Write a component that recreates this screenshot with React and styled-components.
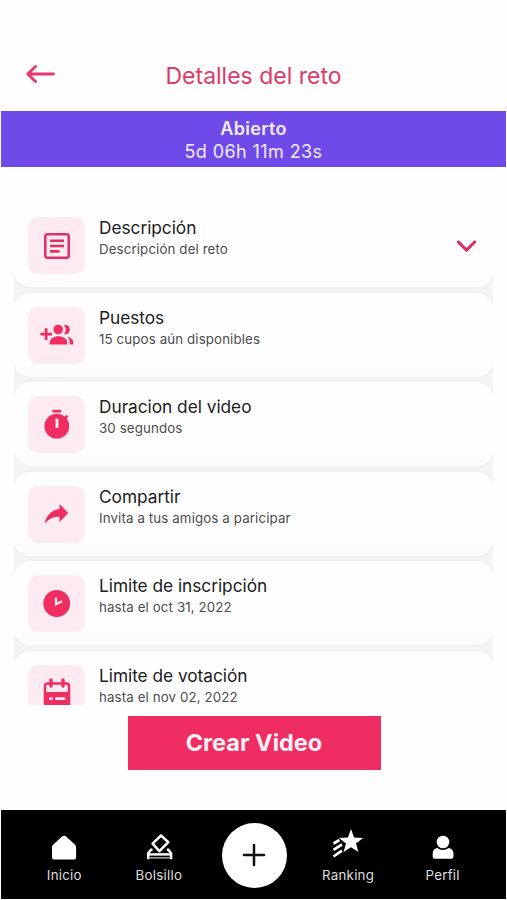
import React from 'react';
import styled, { createGlobalStyle } from 'styled-components';

const pink = '#f02d63';

const GlobalStyle = createGlobalStyle`
  * {
    box-sizing: border-box;
  }
  body {
    margin: 0;
    background: #fff;
    font-family: Inter, 'Liberation Sans', sans-serif;
  }
`;

const Screen = styled.div`
  width: 507px;
  height: 900px;
  display: flex;
  flex-direction: column;
  overflow: hidden;
  background: #fefefe;
`;

const Header = styled.header`
  height: 111px;
  flex: none;
  padding: 40px 26px 0;
  display: grid;
  grid-template-columns: 30px 1fr 30px;
  align-items: center;
`;

const BackButton = styled.button`
  border: 0;
  padding: 0 0 3px;
  height: 30px;
  background: none;
  display: flex;
  align-items: center;
`;

const Title = styled.h1`
  margin: 0;
  text-align: center;
  font-size: 23px;
  font-weight: 400;
  line-height: 30px;
  color: #dc3a68;
  white-space: nowrap;
`;

const Banner = styled.div`
  flex: none;
  height: 56px;
  margin: 0 1px;
  padding-top: 6px;
  text-align: center;
  color: #f1edff;
  background: #7049e9;
`;

const Status = styled.div`
  font-size: 18px;
  font-weight: 600;
  line-height: 23px;
  letter-spacing: 0.3px;
`;

const Countdown = styled.div`
  font-size: 18px;
  line-height: 23px;
  letter-spacing: 0.4px;
`;

const List = styled.div`
  flex: none;
  height: 502px;
  margin: 36px 14px 0;
  overflow: hidden;
  display: flex;
  flex-direction: column;
  gap: 5.6px;
  background: #f4f4f4;
`;

const Card = styled.div`
  flex: none;
  height: 84px;
  padding: 14px 16px 0 14px;
  display: flex;
  border-radius: 16px;
  background: linear-gradient(#fefefe 80%, #fbfbfb);
  box-shadow: 0 0 5px rgba(0, 0, 0, 0.03);

  &:first-child {
    border-top-left-radius: 0;
    border-top-right-radius: 0;
  }
`;

const IconBox = styled.div`
  flex: none;
  width: 57px;
  height: 57px;
  border-radius: 10px;
  display: flex;
  align-items: center;
  justify-content: center;
  background: #fdebf1;
`;

const CardText = styled.div`
  flex: 1;
  margin-left: 14px;
`;

const CardTitle = styled.div`
  font-size: 17.3px;
  line-height: 22px;
  letter-spacing: -0.03px;
  color: #202020;
`;

const CardSub = styled.div`
  margin-top: 1px;
  font-size: 13.3px;
  line-height: 19px;
  letter-spacing: 0.12px;
  color: #4c4c4c;
`;

const Chevron = styled.div`
  display: flex;
  align-items: center;
  height: 58px;
`;

const CreateButton = styled.button`
  flex: none;
  align-self: center;
  width: 253px;
  height: 54px;
  margin: 11px 0 0 1px;
  border: 0;
  padding: 0 0 1px;
  font-family: inherit;
  font-size: 23.5px;
  font-weight: 700;
  color: #fff0f5;
  background: ${pink};
`;

const NavBar = styled.nav`
  flex: none;
  height: 89px;
  margin: 40px 1px 0;
  padding: 0 16px;
  display: grid;
  grid-template-columns: repeat(5, 94.6px);
  background: #000;
`;

const NavItem = styled.div`
  display: flex;
  flex-direction: column;
  align-items: center;
  padding-top: 18px;
  font-size: 13.3px;
  line-height: 18px;
  letter-spacing: 0.25px;
  color: #dedede;
`;

const NavIcon = styled.div`
  height: 38px;
  padding-bottom: ${(props) => props.$lift || 0}px;
  display: flex;
  align-items: center;
`;

const AddButton = styled.div`
  justify-self: center;
  width: 65px;
  height: 65px;
  margin: 13px 0 0 2px;
  padding-bottom: 2px;
  border-radius: 50%;
  display: flex;
  align-items: center;
  justify-content: center;
  background: #fff;
`;

const ArrowLeft = () => (
  <svg width="30" height="20" viewBox="0 0 30 20" fill="none" stroke="#e5396b" strokeWidth="2.9" strokeLinecap="round" strokeLinejoin="round">
    <path d="M27.5 10H2.5M9.5 2.5 1.8 10l7.7 7.5" />
  </svg>
);

const ChevronDown = () => (
  <svg width="21" height="14" viewBox="0 0 21 14" fill="none" stroke="#d92f63" strokeWidth="3.1" strokeLinecap="round">
    <path d="M2.3 3 10.5 11 18.7 3" />
  </svg>
);

const ArticleIcon = () => (
  <svg width="30" height="30" viewBox="0 0 30 30" fill="none" stroke="#df2f66" strokeWidth="2.5">
    <rect x="3.3" y="3.3" width="23.4" height="23.4" rx="2" />
    <path d="M8 9.8h14M8 15h14M8 20.4h9.5" strokeWidth="2.6" />
  </svg>
);

const GroupAddIcon = () => (
  <svg width="34" height="24" viewBox="0 0 34 24" fill={pink}>
    <path d="M4.7 5.2h2.8v4.6H12v2.6H7.5v4.6H4.7v-4.6H.5v-2.6h4.2z" />
    <circle cx="18.2" cy="6.5" r="4.8" />
    <path d="M9.7 21.5v-2c0-4 5-6.2 8.800-6.2s8.800 2.200 8.800 6.200v2z" />
    <path d="M24 1.900c3.500-1 5.800 1.500 5.800 4.600s-2.300 5.600-5.800 4.600c2.300-2.500 2.300-6.700 0-9.200z" />
    <path d="M27.200 13.700c3.700.8 6.100 2.800 6.100 5.800v2h-3.600v-2c0-2.400-.7-4.400-2.500-5.800z" />
  </svg>
);

const TimerIcon = () => (
  <svg width="30" height="32" viewBox="0 0 30 32" fill={pink}>
    <path d="M10.500.8h8.700v2.800h-8.700z" />
    <circle cx="14.800" cy="17.200" r="12.400" />
    <path d="m22 8.200 2.500-2.500 1.900 1.800L24 10.500z" />
    <path d="M13.500 9.500h2.900v9.500h-2.900z" fill="#fdebf1" />
  </svg>
);

const ShareIcon = () => (
  <svg width="28" height="24" viewBox="0 0 28 24" fill={pink}>
    <path d="M16.500 2 25.200 11l-8.700 9.200v-5.400C10 14.500 6.200 16.800 1.500 21.700 3.700 13.200 8.500 7.800 16.500 7.100z" />
  </svg>
);

const ClockIcon = () => (
  <svg width="28" height="28" viewBox="0 0 28 28">
    <circle cx="13.700" cy="13.500" r="13.400" fill={pink} />
    <path d="M13 7.800v6.400l6-3" fill="none" stroke="#fdebf1" strokeWidth="2.200" />
  </svg>
);

const CalendarIcon = () => (
  <svg width="28" height="30" viewBox="0 0 28 30">
    <rect x="2" y="5.500" width="24" height="23" rx="2.500" fill="none" stroke={pink} strokeWidth="2.500" />
    <path d="M1 14h26v14H1z" fill={pink} />
    <path d="M8 2v6M20 2v6" stroke={pink} strokeWidth="3.400" strokeLinecap="round" />
    <path d="M7.500 20.700h.8M13.500 20.700H21" stroke="#fdebf1" strokeWidth="2.800" strokeLinecap="round" />
  </svg>
);

const HomeIcon = () => (
  <svg width="26" height="28" viewBox="0 0 26 28" fill="#fff">
    <path d="M1 14.500c0-1.600.5-2.300 1.600-3.300l8.200-7.500c1.400-1.200 3.200-1.200 4.600 0l8.100 7.500c1.100 1 1.600 1.700 1.600 3.300v10c0 1.300-.8 2-2 2H3c-1.200 0-2-.7-2-2z" />
  </svg>
);

const BallotIcon = () => (
  <svg width="28" height="28" viewBox="0 0 28 28" fill="none" stroke="#fff">
    <path d="m16 2.500 7.300 6.700-8.900 9-6.800-7.500z" strokeWidth="2.500" strokeLinejoin="round" />
    <path d="M7.500 16.800H6l-2.800 3.500v6M21.800 16.800h1.500l2.800 3.500v6" strokeWidth="2.500" />
    <path d="M3.500 21.400h22" strokeWidth="2.400" />
    <path d="M3.500 24h22v1.600h-22z" fill="#999" stroke="none" />
  </svg>
);

const StarIcon = () => (
  <svg width="32" height="30" viewBox="0 0 32 30" fill="#fff">
    <path d="m19 0 3.100 8.500 8.900.4-7 5.600 2.400 8.600-7.400-4.900-7.400 4.900L14 14.500 7 8.900l8.900-.4z" />
    <path d="M1.500 14.500 7.500 11M1.500 20.800l8.500-5.300M1.500 27.500l8.500-5.800" fill="none" stroke="#fff" strokeWidth="2.700" />
  </svg>
);

const UserIcon = () => (
  <svg width="24" height="28" viewBox="0 0 24 28" fill="#fff">
    <circle cx="12" cy="9" r="6.300" />
    <path d="M6.200 15c3.500 2.600 8.100 2.600 11.600 0 3.200.6 4.700 2.800 4.700 6v2.200c0 1.700-1 2.600-2.600 2.600H4.300c-1.700 0-2.600-.9-2.600-2.600V21c0-3.200 1.300-5.400 4.500-6z" />
  </svg>
);

const items = [
  { title: 'Descripción', sub: 'Descripción del reto', Icon: ArticleIcon, expandable: true },
  { title: 'Puestos', sub: '15 cupos aún disponibles', Icon: GroupAddIcon },
  { title: 'Duracion del video', sub: '30 segundos', Icon: TimerIcon },
  { title: 'Compartir', sub: 'Invita a tus amigos a paricipar', Icon: ShareIcon },
  { title: 'Limite de inscripción', sub: 'hasta el oct 31, 2022', Icon: ClockIcon },
  { title: 'Limite de votación', sub: 'hasta el nov 02, 2022', Icon: CalendarIcon },
];

const NavLink = ({ Icon, label, lift }) => (
  <NavItem>
    <NavIcon $lift={lift}>
      <Icon />
    </NavIcon>
    {label}
  </NavItem>
);

const App = () => (
  <Screen>
    <GlobalStyle />
    <Header>
      <BackButton aria-label="Volver">
        <ArrowLeft />
      </BackButton>
      <Title>Detalles del reto</Title>
    </Header>
    <Banner>
      <Status>Abierto</Status>
      <Countdown>5d 06h 11m 23s</Countdown>
    </Banner>
    <List>
      {items.map(({ title, sub, Icon, expandable }) => (
        <Card key={title}>
          <IconBox>
            <Icon />
          </IconBox>
          <CardText>
            <CardTitle>{title}</CardTitle>
            <CardSub>{sub}</CardSub>
          </CardText>
          {expandable && (
            <Chevron>
              <ChevronDown />
            </Chevron>
          )}
        </Card>
      ))}
    </List>
    <CreateButton>Crear Video</CreateButton>
    <NavBar>
      <NavLink Icon={HomeIcon} label="Inicio" />
      <NavLink Icon={BallotIcon} label="Bolsillo" />
      <AddButton>
        <svg width="24" height="24" viewBox="0 0 24 24" stroke="#111" strokeWidth="2.5" strokeLinecap="round">
          <path d="M12 2v20M2 12h20" />
        </svg>
      </AddButton>
      <NavLink Icon={StarIcon} label="Ranking" lift={7} />
      <NavLink Icon={UserIcon} label="Perfil" />
    </NavBar>
  </Screen>
);

export default App;
